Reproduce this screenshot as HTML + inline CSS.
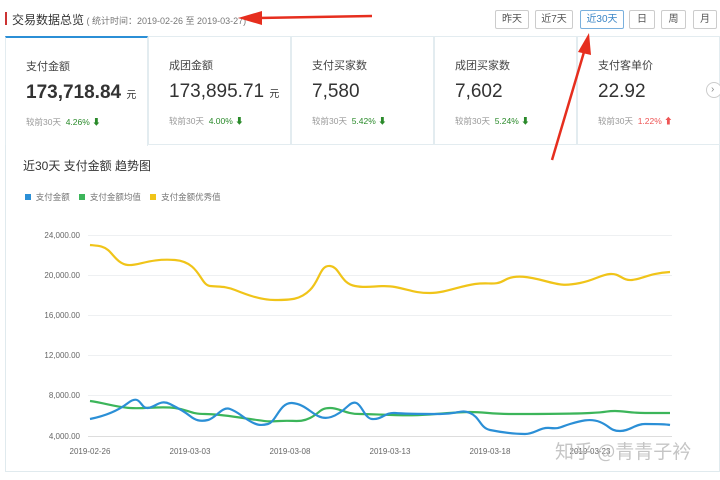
<!DOCTYPE html>
<html><head><meta charset="utf-8"><style>
*{margin:0;padding:0;box-sizing:border-box}
body{width:720px;height:480px;background:#fff;font-family:"Liberation Sans","Noto Sans CJK SC",sans-serif;color:#333;position:relative;overflow:hidden}
.abs{position:absolute}
.btn{position:absolute;top:10px;height:19px;border:1px solid #ccc;font-size:10px;color:#555;text-align:center;line-height:17px;background:#fff;border-radius:2px}
.card{position:absolute;top:36px;height:109px;width:143px;border:1px solid #e3ecf0;background:#fff}
.card .t{position:absolute;left:20px;top:20px;font-size:11px;color:#444}
.card .v{position:absolute;left:20px;top:44px;font-size:19px;color:#333}
.card .v small{font-size:10px}
.card .c{position:absolute;left:20px;top:78px;font-size:8.5px;color:#999}
.g{color:#2a8a2a}.r{color:#e55}
</style></head><body>
<div class="abs" style="left:5px;top:12px;width:2px;height:13px;background:#c33"></div>
<div class="abs" style="left:12px;top:11px;font-size:12px;color:#333">交易数据总览<span style="font-size:9px;color:#777"> ( 统计时间：2019-02-26 至 2019-03-27)</span></div>
<div class="btn" style="left:495px;width:34px">昨天</div>
<div class="btn" style="left:535px;width:38px">近7天</div>
<div class="btn" style="left:580px;width:44px;border-color:#7ab0dd;color:#3a85c6">近30天</div>
<div class="btn" style="left:629px;width:26px">日</div>
<div class="btn" style="left:661px;width:25px">周</div>
<div class="btn" style="left:693px;width:24px">月</div>

<div class="card" style="left:5px;border-top:2px solid #2b8fd6;border-bottom:none;height:110px"><div class="t">支付金额</div><div class="v" style="font-weight:bold">173,718.84 <small style="font-weight:normal">元</small></div><div class="c">较前30天 &nbsp;<span class="g">4.26% ⬇</span></div></div>
<div class="card" style="left:148px"><div class="t">成团金额</div><div class="v">173,895.71 <small>元</small></div><div class="c">较前30天 &nbsp;<span class="g">4.00% ⬇</span></div></div>
<div class="card" style="left:291px"><div class="t">支付买家数</div><div class="v">7,580</div><div class="c">较前30天 &nbsp;<span class="g">5.42% ⬇</span></div></div>
<div class="card" style="left:434px"><div class="t">成团买家数</div><div class="v">7,602</div><div class="c">较前30天 &nbsp;<span class="g">5.24% ⬇</span></div></div>
<div class="card" style="left:577px;width:143px"><div class="t">支付客单价</div><div class="v">22.92</div><div class="c">较前30天 &nbsp;<span class="r">1.22% ⬆</span></div></div>
<div class="abs" style="left:706px;top:82px;width:16px;height:16px;border:1px solid #ccc;border-radius:50%;background:#fff;font-size:10px;color:#888;line-height:14px;text-indent:4px">›</div>

<div class="abs" style="left:5px;top:145px;width:715px;height:327px;border:1px solid #e0eaee;border-top:none"></div>
<div class="abs" style="left:23px;top:157px;font-size:12px;color:#333">近30天 支付金额 趋势图</div>
<div class="abs" style="left:25px;top:191px;font-size:8.5px;color:#777">
<span style="display:inline-block;width:6px;height:6px;background:#2b8fd6"></span>&nbsp; 支付金额 &nbsp;&nbsp;
<span style="display:inline-block;width:6px;height:6px;background:#3cb55a"></span>&nbsp; 支付金额均值 &nbsp;&nbsp;
<span style="display:inline-block;width:6px;height:6px;background:#f0c419"></span>&nbsp; 支付金额优秀值</div>

<svg class="abs" style="left:0;top:0" width="720" height="480">
<g stroke="#eef0f2" stroke-width="1" stroke-dasharray="0">
<line x1="88" y1="235.5" x2="672" y2="235.5"/><line x1="88" y1="275.5" x2="672" y2="275.5"/><line x1="88" y1="315.5" x2="672" y2="315.5"/><line x1="88" y1="355.5" x2="672" y2="355.5"/><line x1="88" y1="395.5" x2="672" y2="395.5"/>
</g>
<line x1="88" y1="436.5" x2="672" y2="436.5" stroke="#ddd"/>
<g font-size="8" fill="#666" text-anchor="end" font-family="Liberation Sans">
<text x="80" y="238">24,000.00</text><text x="80" y="278">20,000.00</text><text x="80" y="318">16,000.00</text><text x="80" y="358">12,000.00</text><text x="80" y="398">8,000.00</text><text x="80" y="439">4,000.00</text>
</g>
<g font-size="8" fill="#666" text-anchor="middle" font-family="Liberation Sans">
<text x="90" y="454">2019-02-26</text><text x="190" y="454">2019-03-03</text><text x="290" y="454">2019-03-08</text><text x="390" y="454">2019-03-13</text><text x="490" y="454">2019-03-18</text><text x="590" y="454">2019-03-23</text>
</g>
<g fill="none" stroke-width="2.2" stroke-linejoin="round">
<path stroke="#f0c419" d="M90 245 C100 246 103 246 108 250 S118 264 128 265 S150 258 175 260 S200 285 210 286 S225 286 235 290 S260 300 275 300 S300 300 310 290 S320 265 330 266 S340 283 355 286 S380 284 395 287 S415 293 430 293 S460 286 475 284 S495 286 505 280 S530 277 545 281 S565 286 580 283 S600 275 610 274 S622 281 632 280 S650 273 670 272"/>
<path stroke="#3cb55a" d="M90 401 C105 403 115 407 130 408 S160 406 175 408 S190 414 205 414 S235 417 250 419 S265 422 280 421 S300 423 310 418 S320 408 330 408 S345 414 360 414 S400 416 420 415 S455 412 470 412 S490 414 510 414 S570 414 590 413 S605 411 615 411 S630 413 645 413 S660 413 670 413"/>
<path stroke="#2b8fd6" d="M90 419 C100 417 115 413 128 403 S140 409 148 408 S160 399 170 404 S185 412 190 416 S200 422 208 420 S222 406 230 409 S240 415 248 420 S260 426 268 424 S280 402 292 403 S310 412 318 416 S335 418 348 406 S362 418 372 419 S385 412 395 413 S420 414 440 414 S460 409 470 413 S480 428 490 430 S515 434 525 434 S540 427 550 428 S560 427 570 424 S590 418 600 422 S610 431 620 431 S635 424 645 424 S665 424 670 425"/>
</g>
<g fill="#e62e1e" stroke="#e62e1e">
<line x1="372" y1="16" x2="258" y2="18" stroke-width="2.5"/>
<polygon points="238,18 262,11 262,25" stroke="none"/>
<line x1="552" y1="160" x2="584" y2="52" stroke-width="2.5"/>
<polygon points="589,33 578,52 591,55" stroke="none"/>
</g>
<text x="555" y="458" font-size="19" fill="#bbb" fill-opacity="0.85" font-family="Noto Sans CJK SC,sans-serif">知乎 @青青子衿</text>
</svg>
</body></html>
